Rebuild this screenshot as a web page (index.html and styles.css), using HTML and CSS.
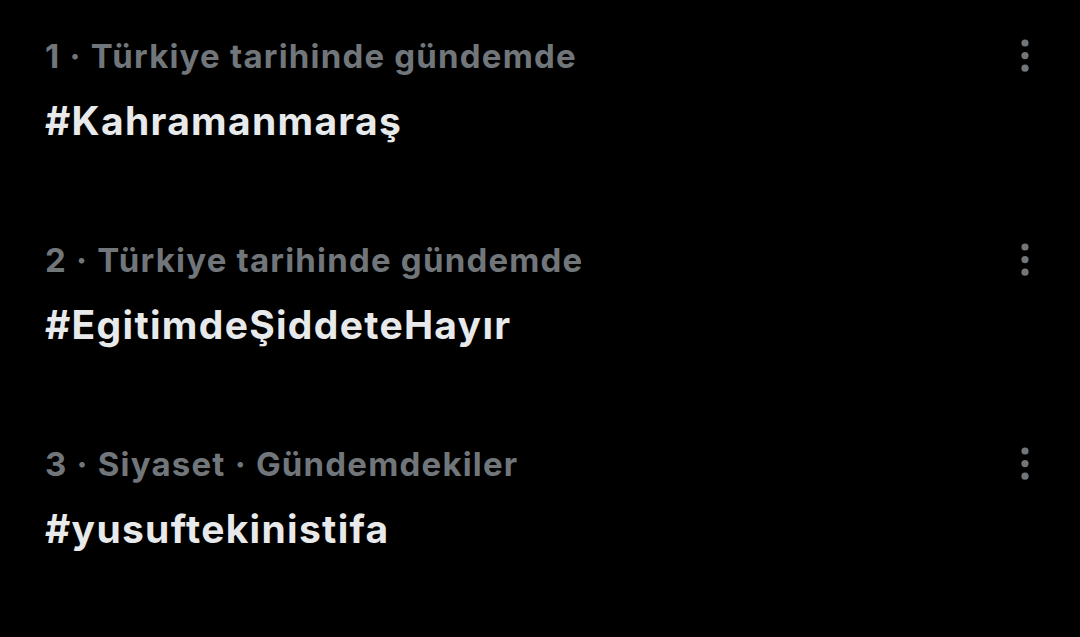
FILE: index.html
```html
<!DOCTYPE html>
<html lang="tr">
<head>
  <meta charset="UTF-8">
  <title>Gündem</title>
  <link rel="stylesheet" href="styles.css">
</head>
<body>
  <div class="trends">
    <div class="trend">
      <div class="trend-text">
        <div class="meta">1 · Türkiye tarihinde gündemde</div>
        <div class="title">#Kahramanmaraş</div>
      </div>
      <button class="more" aria-label="Daha fazla">
        <svg viewBox="0 0 8 34" width="8" height="34"><circle cx="4" cy="4" r="3.6"/><circle cx="4" cy="16.6" r="3.6"/><circle cx="4" cy="29.2" r="3.6"/></svg>
      </button>
    </div>
    <div class="trend">
      <div class="trend-text">
        <div class="meta">2 · Türkiye tarihinde gündemde</div>
        <div class="title">#EgitimdeŞiddeteHayır</div>
      </div>
      <button class="more" aria-label="Daha fazla">
        <svg viewBox="0 0 8 34" width="8" height="34"><circle cx="4" cy="4" r="3.6"/><circle cx="4" cy="16.6" r="3.6"/><circle cx="4" cy="29.2" r="3.6"/></svg>
      </button>
    </div>
    <div class="trend">
      <div class="trend-text">
        <div class="meta">3 · Siyaset · Gündemdekiler</div>
        <div class="title">#yusuftekinistifa</div>
      </div>
      <button class="more" aria-label="Daha fazla">
        <svg viewBox="0 0 8 34" width="8" height="34"><circle cx="4" cy="4" r="3.6"/><circle cx="4" cy="16.6" r="3.6"/><circle cx="4" cy="29.2" r="3.6"/></svg>
      </button>
    </div>
  </div>
</body>
</html>
```

FILE: styles.css
```css
body {
  margin: 0;
  background: #000;
  font-family: Inter, "Noto Sans", sans-serif;
  width: 1080px;
  height: 637px;
  overflow: hidden;
}
.trends {
  display: flex;
  flex-direction: column;
  padding: 36px 51px 0 45px;
}
.trend {
  display: flex;
  justify-content: space-between;
  align-items: flex-start;
  height: 204px;
}
.meta {
  font-size: 33px;
  font-weight: 700;
  color: #71767b;
  line-height: 40px;
  letter-spacing: 1.2px;
}
.title {
  font-size: 39px;
  font-weight: 700;
  color: #e7e9ea;
  line-height: 48px;
  letter-spacing: 1.3px;
  margin-top: 21px;
}
.more {
  background: none;
  border: none;
  padding: 0;
  margin-top: 3px;
  fill: #71767b;
}
```
